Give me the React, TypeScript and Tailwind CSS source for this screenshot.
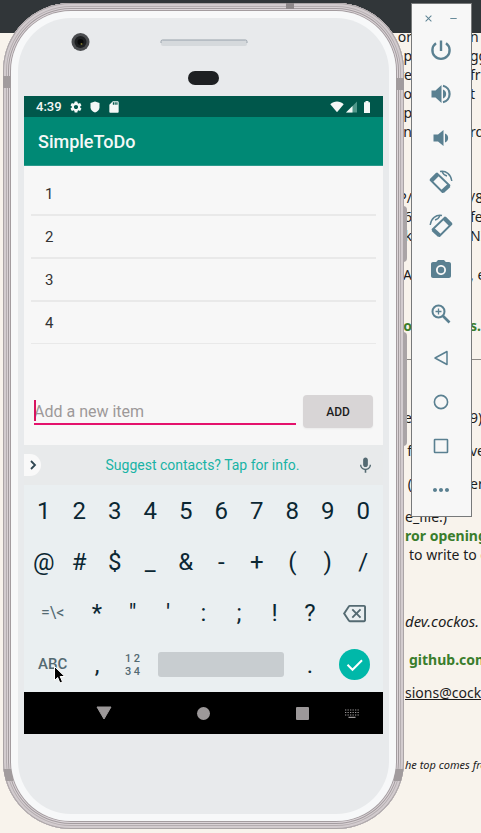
import React from "react";
import {
  MdPhotoCamera,
  MdMoreHoriz,
  MdSettings,
  MdSdCard,
  MdMic,
  MdClose,
  MdRemove,
  MdOutlineBackspace,
} from "react-icons/md";

type Split = { left: string; right: string; gap?: string; tone?: string };

const splitLines: Split[] = [
  { left: "or", right: "n" },
  { left: "p", right: "gg" },
  { left: "re", right: "fr" },
  { left: "o", right: "t" },
  { left: "p", right: "" },
  { left: "n", right: "rd" },
  { left: "P/", right: "/8", gap: "mt-[47px]" },
  { left: "6", right: "fe" },
  { left: "k", right: "NI" },
  { left: "RA", right: ", e", gap: "mt-5" },
  { left: "o", right: "s.", gap: "mt-8", tone: "font-bold text-[#3a7d2c]" },
];

const lowerSplitLines: Split[] = [
  { left: "e", right: "9)", gap: "mt-12" },
  { left: "f", right: "ve", gap: "mt-3.5" },
  { left: "(", right: "er", gap: "mt-3.5" },
];

function SplitLine({ left, right, gap = "", tone = "" }: Split) {
  return (
    <p className={`flex h-[19px] items-center ${gap} ${tone}`}>
      <span className="flex w-4 shrink-0 justify-end">{left}</span>
      <span className="ml-[58px] shrink-0">{right}</span>
    </p>
  );
}

function WebPage() {
  return (
    <div className="absolute inset-0 isolate overflow-hidden bg-[#f8f3ec]">
      <div className="absolute inset-x-0 top-0 z-10 h-[33px] bg-[#313639]" />
      <article className="ml-auto w-[85px] whitespace-nowrap pt-[27px] font-['Noto_Sans','Open_Sans',sans-serif] text-[14px] leading-[19px] text-[#1c1c1c]">
        {splitLines.map((l, i) => (
          <SplitLine key={i} {...l} />
        ))}
        <hr className="mt-6 border-t border-[#8d8a86]" />
        {lowerSplitLines.map((l, i) => (
          <SplitLine key={i} {...l} />
        ))}
        <div className="pl-[9px]">
          <p className="mt-3.5">e_file:)</p>
          <p className="font-bold text-[#3a7d2c]">ror opening</p>
          <p className="pl-1">to write to e</p>
          <p className="mt-12 text-[15px] italic leading-[19px]">dev.cockos.</p>
          <p className="mt-[19px] pl-1 font-bold text-[#3a7d2c]">github.com</p>
          <p className="mt-3.5 underline">sions@cock</p>
          <p className="mt-[53px] text-[11px] italic">he top comes from</p>
        </div>
      </article>
    </div>
  );
}

function Bezel() {
  return (
    <svg className="block h-[78px] w-full" viewBox="0 0 359 78" aria-hidden="true">
      <circle cx="56.500" cy="24" r="9" fill="#4a4c4f" />
      <circle cx="56.500" cy="24" r="6" fill="#1d1f21" />
      <circle cx="56.500" cy="24" r="3" fill="#08090a" />
      <circle cx="57.500" cy="26" r="1" fill="#77702c" />
      <rect x="137" y="22" width="86" height="6" rx="2" fill="#d5d9dc" />
      <path d="M137 25v-1.500q0-1.500 1.500-1.500h83q1.500 0 1.500 1.500V25" fill="none" stroke="#98a2ab" />
      <rect x="164" y="53" width="31" height="14" rx="7" fill="#1e2022" />
    </svg>
  );
}

function StatusBar() {
  return (
    <div className="flex h-[21px] items-center bg-[#00574b] pl-3 pr-3 text-[#f4f7f6]">
      <span className="w-[33px] text-[13px] font-medium leading-none">4:39</span>
      <MdSettings size={14} />
      <svg className="ml-1.5" width="12" height="14" viewBox="0 0 12 14" fill="currentColor" aria-hidden="true">
        <path d="M6 1.500 10.500 3v4.500c0 2.500-2 4-4.500 5-2.500-1-4.500-2.500-4.500-5V3z" />
      </svg>
      <MdSdCard className="ml-1.5" size={14} />
      <span className="ml-auto flex items-center">
        <svg width="14" height="12" viewBox="0 0 14 12" fill="currentColor" aria-hidden="true">
          <path d="M.3 3.200C4-.3 10-.3 13.700 3.200L7 11.300z" />
        </svg>
        <svg className="ml-0.5" width="11" height="12" viewBox="0 0 11 12" aria-hidden="true">
          <path d="M11 .5V11.500H0z" fill="#4f978a" />
          <path d="M6.500 5V11.500H0z" fill="currentColor" />
        </svg>
        <svg className="ml-1.5" width="8" height="12" viewBox="0 0 8 12" fill="currentColor" aria-hidden="true">
          <path d="M2.500 0h3v1.200H7V12H1V1.200h1.500z" />
        </svg>
      </span>
    </div>
  );
}

const keyStyle = "flex items-center justify-center";

function Keyboard() {
  return (
    <div className="bg-[#eaeff1] px-0.5 pb-0.5 text-2xl text-[#0b2733]">
      <div className="grid grid-cols-10">
        {"1234567890@#$_&-+()/".split("").map((k) => (
          <button key={k} className={`${keyStyle} h-[51px]`}>
            {k}
          </button>
        ))}
      </div>
      <div className="grid h-[52px] grid-cols-20">
        <button className={`${keyStyle} col-span-3 text-base text-[#546a72]`}>=\&lt;</button>
        {"*\"':;!?".split("").map((k) => (
          <button key={k} className={`${keyStyle} col-span-2`}>
            {k}
          </button>
        ))}
        <button aria-label="Backspace" className={`${keyStyle} col-span-3 text-[#546a72]`}>
          <MdOutlineBackspace size={23} />
        </button>
      </div>
      <div className="grid h-[51px] grid-cols-20">
        <button className={`${keyStyle} col-span-3 text-[15px] font-medium text-[#546a72]`}>ABC</button>
        <button className={`${keyStyle} col-span-2`}>,</button>
        <button className={`${keyStyle} col-span-2 flex-col text-[11px] font-medium leading-[13px] text-[#546a72]`}>
          <span>1 2</span>
          <span>3 4</span>
        </button>
        <button aria-label="Space" className={`${keyStyle} col-span-8 px-2`}>
          <span className="h-[25px] w-full rounded-[3px] bg-[#c8cdd0]" />
        </button>
        <button className={`${keyStyle} col-span-2`}>.</button>
        <button aria-label="Done" className={`${keyStyle} col-span-3`}>
          <svg width="31" height="31" viewBox="0 0 31 31" fill="none" aria-hidden="true">
            <circle cx="15.500" cy="15.500" r="15.500" fill="#00b8a9" />
            <path d="M8.500 15.800l5 5L23 11.200" stroke="#fff" strokeWidth="2" />
          </svg>
        </button>
      </div>
    </div>
  );
}

function NavBar() {
  return (
    <nav className="grid h-[42px] grid-cols-7 bg-black px-1.5 text-[#9c9899]">
      <button aria-label="Back" className={`${keyStyle} col-start-2`}>
        <svg width="16" height="14" viewBox="0 0 16 14" fill="currentColor">
          <path d="M1 1h14L8 13z" stroke="currentColor" strokeLinejoin="round" />
        </svg>
      </button>
      <button aria-label="Home" className={`${keyStyle} col-start-4`}>
        <span className="size-[13px] rounded-full bg-current" />
      </button>
      <button aria-label="Recent apps" className={`${keyStyle} col-start-6`}>
        <span className="size-[13px] rounded-[1px] bg-current" />
      </button>
      <button aria-label="Switch keyboard" className={`${keyStyle} col-start-7`}>
        <svg width="14" height="9" viewBox="0 0 14 9" fill="none" stroke="currentColor" aria-hidden="true">
          <path d="M0 1h14M0 3.500h14M0 6h14" strokeWidth="1.100" strokeDasharray="1.300 1.200" />
          <path d="M3.500 8.300h7" strokeWidth="1.200" />
        </svg>
      </button>
    </nav>
  );
}

function Screen() {
  return (
    <div className="mx-1.5 bg-[#f7f7f7] font-['Roboto',sans-serif]">
      <StatusBar />
      <header className="flex h-[49px] items-center border-b border-[#2b9a8c] bg-[#008975] px-3.5 pt-0.5">
        <h1 className="text-lg font-medium text-[#f4f8f7]">SimpleToDo</h1>
      </header>
      <ul className="px-[7px] pt-[7px] text-[15px] text-[#333]">
        {["1", "2", "3", "4"].map((item) => (
          <li
            key={item}
            className="flex h-[43px] items-center border-b-2 border-[#e9e9e9] px-3.5 pt-0.5 last:h-[42px] last:border-b"
          >
            {item}
          </li>
        ))}
      </ul>
      <form className="flex items-center gap-[7px] px-2.5 pb-[17px] pt-[51px]" onSubmit={(e) => e.preventDefault()}>
        <div className="relative flex-1">
          <input
            aria-label="Add a new item"
            placeholder="Add a new item"
            className="block h-[27px] w-full border-b-2 border-[#e4126c] bg-transparent pt-0.5 text-base text-[#333] outline-none placeholder:text-[#9d9999]"
          />
          <span className="absolute left-0 top-0.5 h-[21px] w-0.5 bg-[#d8145f]" />
        </div>
        <button className="h-[33px] w-[70px] rounded-sm bg-[#d8d5d6] text-xs font-medium text-[#1d1d1d] shadow-xs">
          ADD
        </button>
      </form>
      <div className="flex h-10 items-center bg-[#e8eaeb]">
        <button aria-label="More suggestions" className="flex h-[22px] w-[17px] items-center justify-center rounded-r-full bg-[#f9f9f9]">
          <svg width="8" height="10" viewBox="0 0 8 10" fill="none" stroke="#2f4652" strokeWidth="1.800" aria-hidden="true">
            <path d="M2 1l4 4-4 4" />
          </svg>
        </button>
        <button className="flex-1 pl-2 text-sm text-[#19b3a5]">Suggest contacts? Tap for info.</button>
        <button aria-label="Voice input" className="mr-2 text-[#546a72]">
          <MdMic size={19} />
        </button>
      </div>
      <Keyboard />
      <NavBar />
    </div>
  );
}

function Phone() {
  return (
    <div className="relative min-w-0 flex-1">
      <span className="absolute -right-[3px] top-[203px] h-14 w-1 rounded-r-sm bg-[#aaa4a6]" />
      <span className="absolute -right-[3px] top-[329px] h-[114px] w-1 rounded-r-sm bg-[#aaa4a6]" />
      <div className="relative overflow-hidden rounded-[68px] bg-[#bdb6b9] p-2 shadow-[inset_0_0_0_1px_#aaa4a6,inset_0_0_0_3px_#d2cbce,inset_0_0_0_4px_#b5aeb1,inset_0_0_0_5px_#d8d1d4,inset_0_0_0_6px_#a39c9f,inset_0_0_0_7px_#dcd5d9,inset_0_0_0_8px_#a39c9f]">
        <span className="absolute left-0 top-[73px] h-3 w-2 bg-[#a19b9d]" />
        <span className="absolute right-0 top-[75px] h-3 w-2 bg-[#a19b9d]" />
        <span className="absolute bottom-[48px] left-0 h-3 w-2.5 bg-[#a19b9d]" />
        <span className="absolute bottom-[48px] right-0 h-3 w-2.5 bg-[#a19b9d]" />
        <span className="absolute right-[110px] top-0 h-1.5 w-2 bg-[#8d8789]" />
        <div className="relative rounded-[60px] bg-[#f7f8f9] p-[7px]">
          <div className="rounded-[53px] bg-[#e8eaec] pb-20">
            <Bezel />
            <Screen />
          </div>
        </div>
      </div>
    </div>
  );
}

function RotateIcon({ flip = false }: { flip?: boolean }) {
  return (
    <svg
      className={flip ? "-scale-x-100" : ""}
      width="24"
      height="24"
      viewBox="0 0 24 24"
      fill="none"
      stroke="currentColor"
      strokeWidth="1.800"
      aria-hidden="true"
    >
      <path d="M8 3.500 20.500 15.500 13.500 22 1.500 10z" strokeLinejoin="round" />
      <path d="M2.500 10.500 8.500 4.500" strokeWidth="4" />
      <path d="M13.500 21.500 20 15.500" strokeWidth="4" />
      <path d="M11 1.500c6-1.200 11 3 11.800 9.500" strokeWidth="1.400" />
      <path d="M13 1.500c1 2.500 3 4 5 4.500" strokeWidth="1.400" />
    </svg>
  );
}

function PowerIcon() {
  return (
    <svg width="24" height="24" viewBox="0 0 24 24" fill="none" stroke="currentColor" strokeWidth="2.400">
      <path d="M12 2.500v10.500" />
      <path d="M7 5.300a8.600 8.600 0 1 0 10 0" />
    </svg>
  );
}

function VolumeIcon({ loud = false }: { loud?: boolean }) {
  return (
    <svg width="24" height="24" viewBox="0 0 24 24" aria-hidden="true">
      {loud ? (
        <>
          <path d="M2.500 8.500h4L12.500 3v18l-6-5.500h-4z" fill="currentColor" />
          <path d="M14 7.500a4.800 4.800 0 0 1 0 9z" fill="currentColor" />
          <path d="M14 3.800a8.400 8.400 0 0 1 0 16.400" fill="none" stroke="currentColor" strokeWidth="2.200" />
        </>
      ) : (
        <>
          <path d="M4.500 8.500h4.500L14.500 4v16L9 15.500H4.500z" fill="currentColor" />
          <path d="M16 7.500a4.800 4.800 0 0 1 0 9z" fill="currentColor" />
        </>
      )}
    </svg>
  );
}

function ZoomIcon() {
  return (
    <svg width="22" height="22" viewBox="0 0 22 22" fill="none" stroke="currentColor" aria-hidden="true">
      <circle cx="8.500" cy="8.500" r="6" strokeWidth="2" />
      <path d="M13 13l6.500 6.500" strokeWidth="2.600" />
      <path d="M5.500 8.500h6M8.500 5.500v6" strokeWidth="1.300" />
    </svg>
  );
}

const tools = [
  { label: "Power", icon: <PowerIcon /> },
  { label: "Volume up", icon: <VolumeIcon loud /> },
  { label: "Volume down", icon: <VolumeIcon /> },
  { label: "Rotate left", icon: <RotateIcon /> },
  { label: "Rotate right", icon: <RotateIcon flip /> },
  { label: "Take screenshot", icon: <MdPhotoCamera size={24} /> },
  { label: "Zoom", icon: <ZoomIcon /> },
  {
    label: "Back",
    icon: (
      <svg width="16" height="16" viewBox="0 0 16 16" fill="none" stroke="currentColor" strokeWidth="1.500">
        <path d="M14 1.500v13L2 8z" strokeLinejoin="round" />
      </svg>
    ),
  },
  {
    label: "Home",
    icon: (
      <svg width="16" height="16" viewBox="0 0 16 16" fill="none" stroke="currentColor" strokeWidth="1.600">
        <circle cx="8" cy="8" r="6.600" />
      </svg>
    ),
  },
  {
    label: "Overview",
    icon: (
      <svg width="16" height="16" viewBox="0 0 16 16" fill="none" stroke="currentColor" strokeWidth="1.600">
        <rect x="1.500" y="1.500" width="13" height="13" rx="0.500" />
      </svg>
    ),
  },
  { label: "More", icon: <MdMoreHoriz size={24} /> },
];

function Toolbar() {
  return (
    <aside className="w-[61px] self-start border border-[#77797a] bg-[#f7f7f7] pb-1 pr-px text-[#5a8091]">
      <div className="flex h-6 items-center justify-center gap-3.5 pt-1">
        <button aria-label="Close">
          <MdClose size={11} />
        </button>
        <button aria-label="Minimize">
          <MdRemove size={11} />
        </button>
      </div>
      {tools.map((t) => (
        <button key={t.label} aria-label={t.label} className="flex h-11 w-full items-center justify-center">
          {t.icon}
        </button>
      ))}
    </aside>
  );
}

export default function App() {
  return (
    <main className="relative min-h-screen overflow-hidden">
      <WebPage />
      <div className="relative flex gap-[7px] pb-[3px] pl-[3px] pr-[9px] pt-[3px]">
        <Phone />
        <Toolbar />
      </div>
      <svg className="absolute left-[53px] top-[665px]" width="14" height="20" viewBox="0 0 14 20" aria-hidden="true">
        <path d="M1.500 1.500v14l3.200-3 2.200 5.500 2.600-1.200-2.300-5.300h4.600z" fill="#000" stroke="#fff" />
      </svg>
    </main>
  );
}
